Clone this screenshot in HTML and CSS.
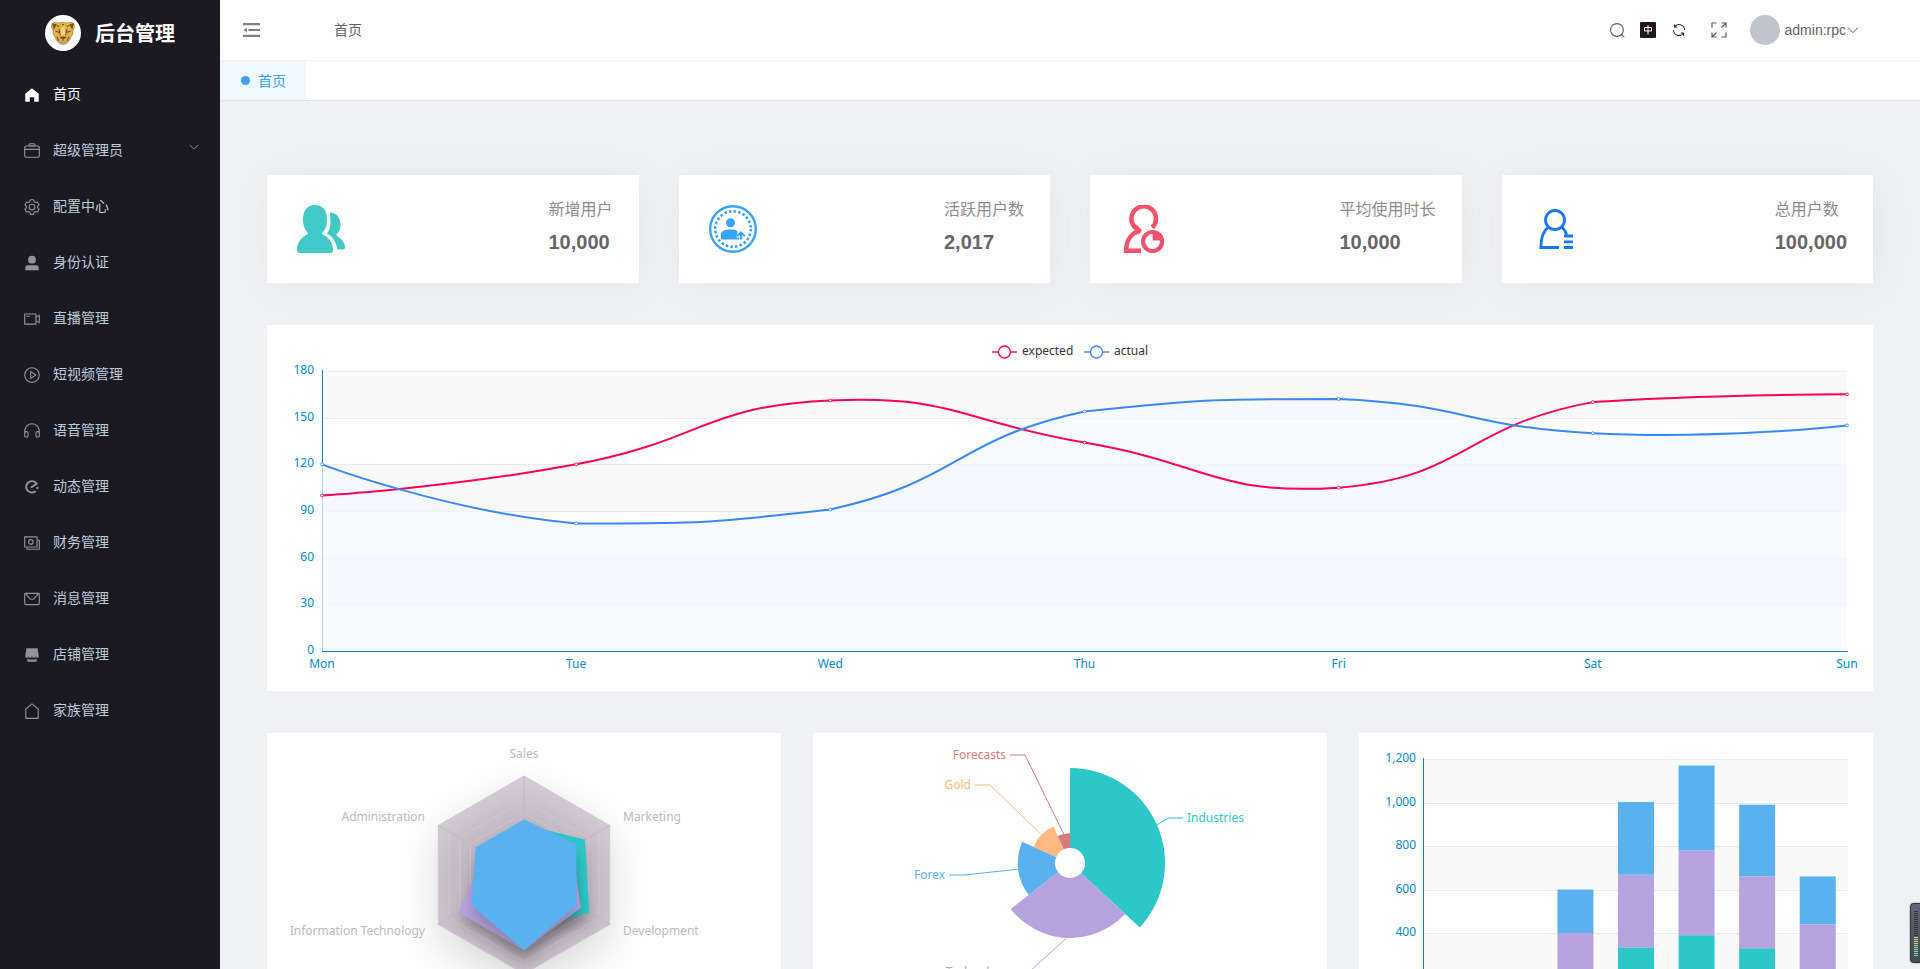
FILE: index.html
```html
<!DOCTYPE html>
<html lang="zh-CN">
<head>
<meta charset="utf-8">
<title>后台管理</title>
<link rel="stylesheet" href="styles.css">
</head>
<body>
<div class="app">
  <aside class="sidebar">
    <a class="brand" href="#">
      <svg class="brand-logo" viewBox="0 0 36 36" aria-hidden="true">
        <circle cx="18" cy="18" r="18" fill="#fff"/>
        <path d="M7 8.500q3-2 6-.500q5-1.500 10 0q3-1.500 6 .500q1.500 4-1 6.500q.500 5-2 7q-1 4-3.500 5.500q-2 2-4.500 2t-4.500-2q-2.500-1.500-3.500-5.500q-2.500-2-2-7q-2.500-2.500-1-6.500z" fill="#dfb24c" stroke="#9c7a3a" stroke-width=".6"/>
        <path d="M8 9l3 .8-2 3.500zM28 9l-3 .8 2 3.500zM12 10.500l2 1M17 9.500h2M22 11.500l2-1M14 14l1.500 6M22 14l-1.500 6M10.500 16l4 1.500M25.500 16l-4 1.500M15 22l3 2 3-2M12 22l2 4M24 22l-2 4M18 24v2" fill="#7a5526" stroke="#7a4f22" stroke-width="1.100"/>
        <path d="M16.500 12h3l1 7-2.500 2-2.500-2z" fill="#f3d67c"/>
        <path d="M16 21.500h4l-2 2.500z" fill="#a3402a"/>
        <path d="M14.500 27.500h7" stroke="#9aa39c" stroke-width="1.500"/>
      </svg>
      <span>后台管理</span>
    </a>
    <nav class="menu">
      <a class="menu-item active" href="#"><svg class="icon" viewBox="0 0 1024 1024"><path d="M512 128 128 447.936V896h255.936V640H640v256h255.936V447.936z"/></svg><span>首页</span></a>
      <a class="menu-item" href="#"><svg class="icon" viewBox="0 0 1024 1024"><path d="M128 384h768v-64a64 64 0 0 0-64-64H192a64 64 0 0 0-64 64v64zm0 64v320a64 64 0 0 0 64 64h640a64 64 0 0 0 64-64V448H128zm64-256h640a128 128 0 0 1 128 128v448a128 128 0 0 1-128 128H192A128 128 0 0 1 64 768V320a128 128 0 0 1 128-128z"/><path d="M384 128v64h256v-64H384zm0-64h256a64 64 0 0 1 64 64v64a64 64 0 0 1-64 64H384a64 64 0 0 1-64-64v-64a64 64 0 0 1 64-64z"/></svg><span>超级管理员</span><svg class="menu-arrow" viewBox="0 0 1024 1024"><path d="M831.872 340.864 512 652.672 192.128 340.864a30.592 30.592 0 0 0-42.752 0 29.12 29.12 0 0 0 0 41.6L489.664 714.24a32 32 0 0 0 44.672 0l340.288-331.712a29.12 29.12 0 0 0 0-41.728 30.592 30.592 0 0 0-42.752 0z"/></svg></a>
      <a class="menu-item" href="#"><svg class="icon" viewBox="0 0 1024 1024"><path d="M600.704 64a32 32 0 0 1 30.464 22.208l35.2 109.376c14.784 7.232 28.928 15.36 42.432 24.512l112.384-24.192a32 32 0 0 1 34.432 15.36L944.32 364.8a32 32 0 0 1-4.032 37.504l-77.12 85.12a357.12 357.12 0 0 1 0 49.024l77.12 85.248a32 32 0 0 1 4.032 37.504l-88.704 153.6a32 32 0 0 1-34.432 15.296L708.8 803.904c-13.44 9.088-27.648 17.28-42.368 24.512l-35.264 109.376A32 32 0 0 1 600.704 960H423.296a32 32 0 0 1-30.464-22.208L357.696 828.48a351.616 351.616 0 0 1-42.56-24.64l-112.32 24.256a32 32 0 0 1-34.432-15.36L79.68 659.2a32 32 0 0 1 4.032-37.504l77.12-85.248a357.12 357.12 0 0 1 0-48.896l-77.12-85.248A32 32 0 0 1 79.68 364.8l88.704-153.6a32 32 0 0 1 34.432-15.296l112.32 24.256c13.568-9.152 27.776-17.408 42.56-24.64l35.2-109.312A32 32 0 0 1 423.232 64H600.64zm-23.424 64H446.72l-36.352 113.088-24.512 11.968a294.113 294.113 0 0 0-34.816 20.096l-22.656 15.36-116.224-25.088-65.28 113.152 79.68 88.192-1.92 27.136a293.12 293.12 0 0 0 0 40.192l1.92 27.136-79.808 88.192 65.344 113.152 116.224-25.024 22.656 15.296a294.113 294.113 0 0 0 34.816 20.096l24.512 11.968L446.72 896h130.688l36.48-113.152 24.448-11.904a288.282 288.282 0 0 0 34.752-20.096l22.592-15.296 116.288 25.024 65.28-113.152-79.744-88.192 1.92-27.136a293.12 293.12 0 0 0 0-40.256l-1.92-27.136 79.808-88.128-65.344-113.152-116.288 24.96-22.592-15.232a287.616 287.616 0 0 0-34.752-20.096l-24.448-11.904L577.344 128zM512 320a192 192 0 1 1 0 384 192 192 0 0 1 0-384zm0 64a128 128 0 1 0 0 256 128 128 0 0 0 0-256z"/></svg><span>配置中心</span></a>
      <a class="menu-item" href="#"><svg class="icon" viewBox="0 0 1024 1024"><path d="M288 320a224 224 0 1 0 448 0 224 224 0 1 0-448 0zm544 608H160a32 32 0 0 1-32-32v-96a160 160 0 0 1 160-160h448a160 160 0 0 1 160 160v96a32 32 0 0 1-32 32z"/></svg><span>身份认证</span></a>
      <a class="menu-item" href="#"><svg class="icon" viewBox="0 0 1024 1024"><path d="M704 768V256H128v512h576zm64-416 192-96v512l-192-96v128a32 32 0 0 1-32 32H96a32 32 0 0 1-32-32V224a32 32 0 0 1 32-32h640a32 32 0 0 1 32 32v128zm0 71.552v176.896l128 64V359.552l-128 64zM192 320h192v64H192v-64z"/></svg><span>直播管理</span></a>
      <a class="menu-item" href="#"><svg class="icon" viewBox="0 0 1024 1024"><path d="M512 64a448 448 0 1 1 0 896 448 448 0 0 1 0-896zm0 832a384 384 0 0 0 0-768 384 384 0 0 0 0 768zm-48-247.616L668.608 512 464 375.616v272.768zm10.624-342.656 249.472 166.336a48 48 0 0 1 0 79.872L474.624 718.272A48 48 0 0 1 400 678.336V345.6a48 48 0 0 1 74.624-39.936z"/></svg><span>短视频管理</span></a>
      <a class="menu-item" href="#"><svg class="icon" viewBox="0 0 1024 1024"><path d="M896 529.152V512a384 384 0 1 0-768 0v17.152A128 128 0 0 1 320 640v128a128 128 0 1 1-256 0V512a448 448 0 1 1 896 0v256a128 128 0 1 1-256 0V640a128 128 0 0 1 192-110.848zM896 640a64 64 0 0 0-128 0v128a64 64 0 0 0 128 0V640zm-768 0v128a64 64 0 0 0 128 0V640a64 64 0 1 0-128 0z"/></svg><span>语音管理</span></a>
      <a class="menu-item" href="#"><svg class="icon" viewBox="0 0 1024 1024"><path d="M300.032 188.8c174.72-113.28 408-63.36 522.24 109.44 5.76 10.56 11.52 20.16 17.28 30.72v.96a22.4 22.4 0 0 1-7.68 26.88l-352.32 228.48c-9.6 6.72-22.08 3.84-28.8-5.76l-18.24-27.84a54.336 54.336 0 0 1 16.32-74.88l225.6-146.88c9.6-6.72 12.48-19.2 5.76-28.8-.96-1.92-1.92-3.84-3.84-4.8a267.84 267.84 0 0 0-315.84-17.28c-123.84 81.6-159.36 247.68-78.72 371.52a268.096 268.096 0 0 0 370.56 78.72 54.336 54.336 0 0 1 74.88 16.32l17.28 26.88c5.76 9.6 3.84 21.12-4.8 27.84-8.64 7.68-18.24 14.4-28.8 21.12a377.92 377.92 0 0 1-522.24-110.4c-113.28-174.72-63.36-408 111.36-522.24zm526.08 305.28a22.336 22.336 0 0 1 28.8 5.76l23.04 35.52a63.232 63.232 0 0 1-18.24 87.36l-35.52 23.04c-9.6 6.72-22.08 3.84-28.8-5.76l-46.08-71.04c-6.72-9.6-3.84-22.08 5.76-28.8l71.04-46.08z"/></svg><span>动态管理</span></a>
      <a class="menu-item" href="#"><svg class="icon" viewBox="0 0 1024 1024"><path d="M128 192v512h640V192H128zm-32-64h704a32 32 0 0 1 32 32v576a32 32 0 0 1-32 32H96a32 32 0 0 1-32-32V160a32 32 0 0 1 32-32z"/><path d="M192 768h64v64h640V384h-64v-64h96a32 32 0 0 1 32 32v512a32 32 0 0 1-32 32H224a32 32 0 0 1-32-32z"/><path d="M448 288a160 160 0 1 1 0 320 160 160 0 0 1 0-320zm0 64a96 96 0 1 0 0 192 96 96 0 0 0 0-192z"/></svg><span>财务管理</span></a>
      <a class="menu-item" href="#"><svg class="icon" viewBox="0 0 1024 1024"><path d="M128 224v512a64 64 0 0 0 64 64h640a64 64 0 0 0 64-64V224H128zm0-64h768a64 64 0 0 1 64 64v512a128 128 0 0 1-128 128H192A128 128 0 0 1 64 736V224a64 64 0 0 1 64-64z"/><path d="M904 224 656.512 506.88a192 192 0 0 1-289.024 0L120 224h784zm-698.944 0 210.56 240.704a128 128 0 0 0 192.704 0L818.944 224H205.056z"/></svg><span>消息管理</span></a>
      <a class="menu-item" href="#"><svg class="icon" viewBox="0 0 1024 1024"><path d="M704 704h64v192H256V704h64v64h384v-64zm188.544-152.192C894.528 559.616 896 567.616 896 576a96 96 0 1 1-192 0 96 96 0 1 1-192 0 96 96 0 1 1-192 0 96 96 0 1 1-192 0c0-8.384 1.408-16.384 3.392-24.192L192 128h640l60.544 423.808z"/></svg><span>店铺管理</span></a>
      <a class="menu-item" href="#"><svg class="icon" viewBox="0 0 1024 1024"><path d="M192 413.952V896h640V413.952L512 147.328 192 413.952zM139.52 374.4l352-293.312a32 32 0 0 1 40.96 0l352 293.312A32 32 0 0 1 896 398.976V928a32 32 0 0 1-32 32H160a32 32 0 0 1-32-32V398.976a32 32 0 0 1 11.52-24.576z"/></svg><span>家族管理</span></a>
    </nav>
  </aside>

  <div class="main">
    <header class="navbar">
      <button class="fold" aria-label="折叠菜单"><svg viewBox="0 0 17 14"><path d="M0 0h17v2.200H0zM5.500 5.900h11.500v2.200H5.500zM0 11.800h17v2.200H0zM4 4.500v5L.5 7z"/></svg></button>
      <a class="crumb" href="#">首页</a>
      <div class="tools">
        <button class="tool" aria-label="搜索"><svg class="tool-search" viewBox="0 0 1024 1024"><path d="m795.904 750.72 124.992 124.928a32 32 0 0 1-45.248 45.248L750.656 795.904a416 416 0 1 1 45.248-45.248zM480 832a352 352 0 1 0 0-704 352 352 0 0 0 0 704z"/></svg></button>
        <button class="tool lang" aria-label="语言"><svg viewBox="0 0 16 16" fill="none" stroke="#fff"><path d="M4.500 5.500h7v3.500h-7zM8 3v9.500"/></svg></button>
        <button class="tool" aria-label="刷新"><svg class="tool-refresh" viewBox="0 0 1024 1024"><path d="M771.776 794.88A384 384 0 0 1 128 512h64a320 320 0 0 0 555.712 216.448H654.72a32 32 0 1 1 0-64h149.056a32 32 0 0 1 32 32v148.928a32 32 0 1 1-64 0v-50.56zM276.288 295.616h92.992a32 32 0 0 1 0 64H220.16a32 32 0 0 1-32-32V178.56a32 32 0 0 1 64 0v50.56A384 384 0 0 1 896.128 512h-64a320 320 0 0 0-555.776-216.384z"/></svg></button>
        <button class="tool tool-wide" aria-label="全屏"><svg class="tool-full" viewBox="0 0 16 16" fill="none" stroke="#5a5e66" stroke-width="1.200"><path d="M1 5.500V1h4.500M10.500 1H15v4.500M15 1l-4.500 4.500M15 10.500V15h-4.500M1 10.500V15h4.500M1 15l4.500-4.500"/></svg></button>
        <button class="user"><span class="avatar"></span><span>admin:rpc</span><svg viewBox="0 0 1024 1024"><path d="M831.872 340.864 512 652.672 192.128 340.864a30.592 30.592 0 0 0-42.752 0 29.12 29.12 0 0 0 0 41.6L489.664 714.24a32 32 0 0 0 44.672 0l340.288-331.712a29.12 29.12 0 0 0 0-41.728 30.592 30.592 0 0 0-42.752 0z"/></svg></button>
      </div>
    </header>
    <div class="tabs"><a class="tab" href="#"><i class="tab-dot"></i><span>首页</span></a></div>

    <main class="content">
      <section class="stats">
        <article class="stat">
          <svg class="stat-icon" viewBox="0 0 48 48" fill="#40c9c6"><path d="M18 0c7.500 0 12 5.500 12 14 0 6-1.500 11-5 14v1c6.500 3 11 8.500 11 16 0 2-1 3-3 3H3c-2 0-3-1-3-3 0-7.500 4.500-13 11-16v-1c-3.500-3-5-8-5-14C6 5.500 10.500 0 18 0z"/><path d="M33 7.500c6.500.5 10.500 5 10.500 12 0 4-1.200 8-4 9.500v1.500C44 33.500 48 37.500 48 42c0 1.800-1 2.500-2.500 2.500h-5.200C39.500 38 36.500 32.500 30 28.500c2.500-2.500 3.500-7 3.500-12z"/></svg>
          <div class="stat-text"><h3>新增用户</h3><strong>10,000</strong></div>
        </article>
        <article class="stat">
          <svg class="stat-icon" viewBox="0 0 48 48" fill="#36a3f7"><circle cx="24" cy="24" r="22.800" fill="none" stroke="#36a3f7" stroke-width="2.400"/><circle cx="24" cy="24" r="17.800" fill="none" stroke="#36a3f7" stroke-width="2.600" stroke-dasharray="2.500 2.160"/><circle cx="21.500" cy="17.800" r="4.500"/><path d="M12 34.500v-5c0-3.500 3-5 9.500-5s7 1.500 7 3l-1 5h2.500v2z"/><path d="M32 26l4.500 4.500-1.300 1.300-2-1.800v4.500h-2.400V30l-2 1.800-1.300-1.300z"/></svg>
          <div class="stat-text"><h3>活跃用户数</h3><strong>2,017</strong></div>
        </article>
        <article class="stat">
          <svg class="stat-icon" viewBox="0 0 48 48" fill="none" stroke="#f4516c" stroke-width="4.500"><path d="M32.200 22.500a12.300 12.300 0 1 0-14.200 2"/><path d="M20 26c-8.500 1.500-13.500 9-14 19.700h15"/><path d="M15.500 21.500l5 5.500"/><circle cx="32.600" cy="36.500" r="9.500" stroke-width="4.200"/><path d="M32.500 28h8v7.500h-8z" fill="#f4516c" stroke="none"/><path d="M31.200 29v8.200h8" stroke="#fff" stroke-width="2.500"/></svg>
          <div class="stat-text"><h3>平均使用时长</h3><strong>10,000</strong></div>
        </article>
        <article class="stat">
          <svg class="stat-icon" viewBox="0 0 48 48" fill="none" stroke="#1677ff" stroke-width="2.800"><circle cx="23" cy="15" r="9.500"/><path d="M16.500 22C11 26 9 33 8.800 42.500H27M29.500 22c3 2.500 4.500 5 5 7.500M32 31h9M32 36.800h9M32 42.500h9"/></svg>
          <div class="stat-text"><h3>总用户数</h3><strong>100,000</strong></div>
        </article>
      </section>

      <section class="panel"><svg class="chart" id="line-chart" viewBox="0 0 1606 366" role="img" aria-label="expected / actual"></svg></section>

      <section class="panels">
        <div class="panel"><svg class="chart" id="radar-chart" viewBox="0 0 514 316" role="img" aria-label="预算雷达图">
          <defs>
            <filter id="area-shadow" filterUnits="userSpaceOnUse" x="0" y="-60" width="514" height="440" color-interpolation-filters="sRGB"><feDropShadow dx="0" dy="15" stdDeviation="22" flood-color="#000" flood-opacity=".5"/></filter>
            <filter id="series-shadow" filterUnits="userSpaceOnUse" x="0" y="-60" width="514" height="440" color-interpolation-filters="sRGB"><feDropShadow dx="0" dy="10" stdDeviation="7" flood-color="#000" flood-opacity=".2"/></filter>
          </defs>
        </svg></div>
        <div class="panel"><svg class="chart" id="pie-chart" viewBox="0 0 514 316" role="img" aria-label="投资分布"></svg></div>
        <div class="panel"><svg class="chart" id="bar-chart" viewBox="0 0 514 316" role="img" aria-label="访问统计"></svg></div>
      </section>
    </main>
  </div>

  <div class="meter" aria-hidden="true"><i class="meter-off"></i><i class="meter-on"></i></div>
</div>
<script src="charts.js"></script>
</body>
</html>
```

FILE: styles.css
```css
* { box-sizing: border-box; }

body {
  margin: 0;
  font-family: "Liberation Sans", "Noto Sans CJK SC", sans-serif;
  font-size: 14px;
  color: #606266;
  background: #f0f1f5;
}

a { color: inherit; text-decoration: none; }

button {
  margin: 0;
  padding: 0;
  border: 0;
  background: none;
  color: inherit;
  font: inherit;
  cursor: pointer;
}

svg { display: block; }

.app { display: flex; height: 100vh; overflow: hidden; }

/* Sidebar */
.sidebar { flex: 0 0 220px; background: #1b1a23; }

.brand {
  display: flex;
  align-items: center;
  justify-content: center;
  gap: 14px;
  height: 65px;
  color: #fff;
  font-size: 20px;
  font-weight: bold;
}

.brand-logo { width: 36px; height: 36px; }

.menu { display: flex; flex-direction: column; }

.menu-item {
  display: flex;
  align-items: center;
  gap: 12px;
  height: 56px;
  padding: 0 20px 0 23px;
  color: #bfcbd9;
}

.menu-item .icon { width: 18px; height: 18px; margin-top: 4px; fill: #909399; }
.menu-item.active { color: #fff; }
.menu-item.active .icon { fill: #fff; }
.menu-arrow { width: 12px; height: 12px; margin: -4px 0 0 auto; fill: #909399; }

/* Header */
.main { flex: 1; min-width: 0; overflow: hidden; }

.navbar {
  display: flex;
  align-items: center;
  height: 61px;
  padding: 0 60px 0 23px;
  background: #fff;
  border-bottom: 1px solid #f0f0f2;
}

.fold svg { width: 17px; height: 14px; fill: #808080; }
.crumb { margin-left: 74px; padding-bottom: 2px; }

.tools { display: flex; align-items: center; margin-left: auto; }
.tool { display: flex; justify-content: center; width: 31px; }
.tool-search { width: 17px; height: 17px; fill: #606266; }
.tool-refresh { width: 16px; height: 16px; fill: #222; }
.tool-wide { width: 48px; }
.tool-full { width: 16px; height: 16px; }

.lang svg { width: 16px; height: 16px; background: #231815; border-radius: 1px; }

.user { display: flex; align-items: center; margin-left: 7px; }
.user svg { width: 14px; height: 14px; fill: #606266; }
.avatar { width: 30px; height: 30px; margin-right: 5px; border-radius: 50%; background: #c0c4cc; }

.tabs {
  display: flex;
  height: 40px;
  background: #fff;
  border-bottom: 1px solid #dfe3ed;
}

.tab {
  display: flex;
  align-items: center;
  gap: 8px;
  padding: 0 20px 0 21px;
  background: #eff7ff;
  color: #409eff;
}

.tab span { padding-bottom: 2px; }
.tab-dot { width: 9px; height: 9px; border-radius: 50%; background: #409eff; }

/* Dashboard */
.content {
  display: flex;
  flex-direction: column;
  gap: 42px;
  padding: 74px 47px 42px;
}

.stats { display: grid; grid-template-columns: repeat(4, 1fr); gap: 40px; }

.stat {
  display: flex;
  justify-content: space-between;
  height: 108px;
  padding: 26px 26px 0 30px;
  background: #fff;
  box-shadow: 4px 4px 40px rgba(0, 0, 0, .05);
}

.stat-icon { width: 48px; height: 48px; margin-top: 4px; }
.stat-text h3 { margin: 0 0 12px; font-size: 16px; font-weight: normal; line-height: 18px; color: #8c8c8c; }
.stat-text strong { display: block; font-size: 20px; line-height: 22px; color: #666; }

.panel { background: #fff; }
.panels { display: grid; grid-template-columns: repeat(3, 1fr); gap: 32px; }

.chart { width: 100%; height: auto; font-family: "Noto Sans", sans-serif; font-size: 12px; }
.axis-label { fill: #008acd; }
.legend-label { fill: #333; }
.radar-label { fill: #bbb; }

/* Level meter on the window edge */
.meter {
  position: fixed;
  right: 0;
  bottom: 6px;
  display: flex;
  flex-direction: column;
  width: 10px;
  height: 60px;
  padding: 7px 2px 0 3px;
  border: 1px solid #33363f;
  border-right: 0;
  border-radius: 4px 0 0 4px;
  background: linear-gradient(#636777, #454951);
  box-shadow: 0 0 1px 1px rgba(0, 0, 0, .15);
}

.meter-off { height: 26px; background: repeating-linear-gradient(#32353d 0 1px, transparent 1px 2px); }
.meter-on {
  height: 20px;
  background: repeating-linear-gradient(transparent 0 1px, #50545d 1px 2px), linear-gradient(#c8e66e, #6ad9c6);
}
```

FILE: charts.js
```js
(function () {
  var NS = 'http://www.w3.org/2000/svg';
  var TEAL = '#2ec7c9', PURPLE = '#b6a2de', BLUE = '#5ab1ef', ORANGE = '#ffb980', RED = '#d87a80', AXIS = '#008acd';

  function add(parent, tag, attrs, text) {
    var node = document.createElementNS(NS, tag);
    for (var key in attrs) node.setAttribute(key, attrs[key]);
    if (text !== undefined) node.textContent = text;
    parent.appendChild(node);
    return node;
  }

  function grid(svg, left, right, ticks) {
    ticks.forEach(function (t, i) {
      if (i > 0) {
        add(svg, 'rect', { x: left, y: t.y, width: right - left, height: ticks[i - 1].y - t.y, fill: i % 2 ? '#fefefe' : '#f9f9f9' });
      }
    });
    ticks.forEach(function (t) {
      var y = Math.round(t.y) + 0.5;
      add(svg, 'path', { d: 'M' + left + ' ' + y + 'H' + right, stroke: '#eaeaea' });
      add(svg, 'text', { x: left - 8, y: t.y + 3, 'text-anchor': 'end', 'class': 'axis-label' }, t.label);
    });
  }

  // Smooth curve through the points, control points kept inside their bounding box
  function smoothPath(pts) {
    var xs = pts.map(function (p) { return p[0]; }), ys = pts.map(function (p) { return p[1]; });
    var x0 = Math.min.apply(null, xs), x1 = Math.max.apply(null, xs);
    var y0 = Math.min.apply(null, ys), y1 = Math.max.apply(null, ys);
    function clamp(p) { return [Math.max(x0, Math.min(x1, p[0])), Math.max(y0, Math.min(y1, p[1]))]; }
    function dist(a, b) { return Math.hypot(a[0] - b[0], a[1] - b[1]); }
    var d = 'M' + pts[0].join(' '), cp0 = pts[0];
    for (var i = 1; i < pts.length; i++) {
      var p = pts[i], prev = pts[i - 1], next = pts[i + 1], cp1 = p, r = 0.5, v = [0, 0];
      if (next) {
        v = [next[0] - prev[0], next[1] - prev[1]];
        r = dist(p, next) / (dist(p, next) + dist(p, prev));
        cp1 = [p[0] - v[0] * 0.5 * (1 - r), p[1] - v[1] * 0.5 * (1 - r)];
      }
      d += 'C' + clamp(cp0).concat(clamp(cp1), p).join(' ');
      cp0 = [p[0] + v[0] * 0.5 * r, p[1] + v[1] * 0.5 * r];
    }
    return d;
  }

  function drawLine() {
    var svg = document.getElementById('line-chart');
    var left = 55, right = 1580, bottom = 326, unit = 280 / 180;
    var days = ['Mon', 'Tue', 'Wed', 'Thu', 'Fri', 'Sat', 'Sun'];
    var ticks = [0, 30, 60, 90, 120, 150, 180].map(function (v) { return { y: bottom - v * unit, label: v }; });
    function points(data) {
      return data.map(function (v, i) { return [left + i * (right - left) / 6, bottom - v * unit]; });
    }
    var expected = points([100, 120, 161, 134, 105, 160, 165]);
    var actual = points([120, 82, 91, 154, 162, 140, 145]);
    grid(svg, left, right, ticks);
    add(svg, 'path', { d: 'M55.500 45V327', stroke: AXIS });
    add(svg, 'path', { d: smoothPath(actual) + 'V' + bottom + 'H' + left + 'Z', fill: '#f3f8ff', 'fill-opacity': 0.7 });
    add(svg, 'path', { d: 'M55 326.500H1581', stroke: AXIS });
    days.forEach(function (day, i) {
      add(svg, 'text', { x: left + i * (right - left) / 6, y: 343, 'text-anchor': 'middle', 'class': 'axis-label' }, day);
    });
    [[expected, '#ff005a'], [actual, '#3888fa']].forEach(function (s) {
      add(svg, 'path', { d: smoothPath(s[0]), fill: 'none', stroke: s[1], 'stroke-width': 2 });
      s[0].forEach(function (p) { add(svg, 'circle', { cx: p[0], cy: p[1], r: 1.5, fill: '#fff', stroke: s[1], 'stroke-width': 0.8 }); });
    });
    [['expected', '#ff005a', 725], ['actual', '#3888fa', 817]].forEach(function (l) {
      add(svg, 'path', { d: 'M' + l[2] + ' 27h25', stroke: l[1], 'stroke-width': 1.4 });
      add(svg, 'circle', { cx: l[2] + 12.5, cy: 27, r: 6, fill: '#fff', stroke: l[1], 'stroke-width': 1.3 });
      add(svg, 'text', { x: l[2] + 30, y: 30, 'class': 'legend-label' }, l[0]);
    });
  }

  function drawRadar() {
    var svg = document.getElementById('radar-chart'), cx = 257, cy = 142, R = 99;
    function hexagon(ratios) {
      return ratios.map(function (k, i) {
        var a = Math.PI / 2 + i * Math.PI / 3;
        return (cx + R * k * Math.cos(a)).toFixed(1) + ',' + (cy - R * k * Math.sin(a)).toFixed(1);
      }).join(' ');
    }
    function ring(k) { return hexagon([k, k, k, k, k, k]); }
    add(svg, 'polygon', { points: ring(1), fill: '#7f5f84', 'fill-opacity': 0.3, filter: 'url(#area-shadow)' });
    for (var i = 1; i <= 8; i++) add(svg, 'polygon', { points: ring(i / 8), fill: 'none', stroke: '#cccacc' });
    ring(1).split(' ').forEach(function (p) { add(svg, 'path', { d: 'M257 142L' + p, stroke: '#bbb' }); });
    [[[.5, .35, .6, .55, .75, .7], TEAL], [[.4, .45, .75, .75, .65, .55], PURPLE], [[.55, .55, .6, .75, .6, .6], BLUE]].forEach(function (s) {
      add(svg, 'polygon', { points: hexagon(s[0]), fill: s[1], filter: 'url(#series-shadow)' });
      add(svg, 'polygon', { points: hexagon(s[0]), fill: 'none', stroke: s[1], 'stroke-width': 2 });
    });
    [['Sales', 257, 25, 'middle'], ['Administration', 158, 88, 'end'], ['Information Technology', 158, 202, 'end'],
      ['Development', 356, 202, 'start'], ['Marketing', 356, 88, 'start']].forEach(function (l) {
      add(svg, 'text', { x: l[1], y: l[2], 'text-anchor': l[3], 'class': 'radar-label' }, l[0]);
    });
  }

  function drawPie() {
    var svg = document.getElementById('pie-chart'), cx = 257, cy = 130, angle = 0;
    var slices = [
      { name: 'Industries', value: 320, color: TEAL, elbow: [355, 85], side: 1 },
      { name: 'Technology', value: 240, color: PURPLE, elbow: [216, 239], side: -1 },
      { name: 'Forex', value: 149, color: BLUE, elbow: [151, 142], side: -1 },
      { name: 'Gold', value: 100, color: ORANGE, elbow: [177, 52], side: -1 },
      { name: 'Forecasts', value: 59, color: RED, elbow: [212, 22], side: -1 }
    ];
    function polar(r, a) { return (cx + r * Math.sin(a)).toFixed(2) + ' ' + (cy - r * Math.cos(a)).toFixed(2); }
    slices.forEach(function (s) {
      var sweep = s.value / 868 * Math.PI * 2, end = angle + sweep, r = 15 + s.value / 320 * 80;
      add(svg, 'path', {
        d: 'M' + polar(15, angle) + 'L' + polar(r, angle) + 'A' + r + ' ' + r + ' 0 0 1 ' + polar(r, end) +
          'L' + polar(15, end) + 'A15 15 0 0 0 ' + polar(15, angle) + 'Z',
        fill: s.color
      });
      add(svg, 'path', { d: 'M' + polar(r, angle + sweep / 2) + 'L' + s.elbow.join(' ') + 'h' + 15 * s.side, fill: 'none', stroke: s.color });
      add(svg, 'text', { x: s.elbow[0] + 19 * s.side, y: s.elbow[1] + 4, 'text-anchor': s.side > 0 ? 'start' : 'end', fill: s.color }, s.name);
      angle = end;
    });
  }

  function drawBars() {
    var svg = document.getElementById('bar-chart'), left = 65, right = 489, bottom = 287, unit = 261 / 1200;
    var step = (right - left) / 7, width = 36;
    var ticks = [0, 200, 400, 600, 800, 1000, 1200].map(function (v) {
      return { y: bottom - v * unit, label: v.toLocaleString('en-US') };
    });
    grid(svg, left, right, ticks);
    add(svg, 'path', { d: 'M64.500 25V287', stroke: AXIS });
    [[79, 80, 30], [52, 52, 52], [200, 200, 200], [334, 334, 334], [390, 390, 390], [330, 330, 330], [220, 220, 220]].forEach(function (stack, i) {
      var base = bottom;
      stack.forEach(function (v, k) {
        var h = v * unit;
        add(svg, 'rect', { x: left + step * (i + 0.5) - width / 2, y: base - h, width: width, height: h, fill: [TEAL, PURPLE, BLUE][k] });
        base -= h;
      });
    });
  }

  drawLine();
  drawRadar();
  drawPie();
  drawBars();
})();
```
